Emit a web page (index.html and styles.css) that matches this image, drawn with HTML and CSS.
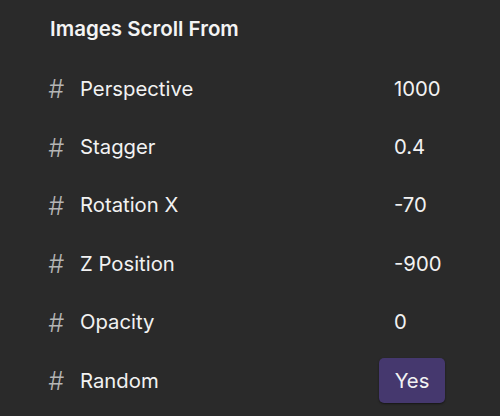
FILE: index.html
```html
<!DOCTYPE html>
<html>
<head>
<meta charset="utf-8">
<link rel="stylesheet" href="styles.css">
</head>
<body>
<div class="panel">
  <div class="title">Images Scroll From</div>
  <div class="rows">
    <div class="row"><span class="hash">#</span><span class="label">Perspective</span><span class="value">1000</span></div>
    <div class="row"><span class="hash">#</span><span class="label">Stagger</span><span class="value">0.4</span></div>
    <div class="row"><span class="hash">#</span><span class="label">Rotation X</span><span class="value">-70</span></div>
    <div class="row"><span class="hash">#</span><span class="label">Z Position</span><span class="value">-900</span></div>
    <div class="row"><span class="hash">#</span><span class="label">Opacity</span><span class="value">0</span></div>
    <div class="row"><span class="hash">#</span><span class="label">Random</span><span class="value"><span class="btn">Yes</span></span></div>
  </div>
</div>
</body>
</html>
```
FILE: styles.css
```css
html, body {
  margin: 0;
  padding: 0;
  background: #2a2a2a;
}
body {
  width: 500px;
  height: 416px;
  overflow: hidden;
  font-family: Inter, "Noto Sans", sans-serif;
  color: #f2f2f2;
}
.panel {
  padding: 16px 0 0 50px;
}
.title {
  font-size: 20.5px;
  font-weight: 600;
  line-height: 26px;
  color: #f4f4f4;
}
.rows {
  margin-top: 17px;
  display: flex;
  flex-direction: column;
  margin-left: -2px;
}
.row {
  height: 58.4px;
  display: flex;
  align-items: center;
  font-size: 20.3px;
}
.hash {
  width: 32px;
  font-size: 25px;
  font-weight: 300;
  color: #b5b5b5;
  font-style: italic;
  transform: translateY(1px);
}
.label {
  width: 314px;
}
.value {
  display: flex;
  align-items: center;
}
.btn {
  margin-left: -15px;
  background: #45386e;
  border-radius: 5px;
  width: 66px;
  height: 45px;
  display: flex;
  align-items: center;
  justify-content: center;
  box-shadow: 0 1px 2px rgba(0,0,0,0.5);
}
```
